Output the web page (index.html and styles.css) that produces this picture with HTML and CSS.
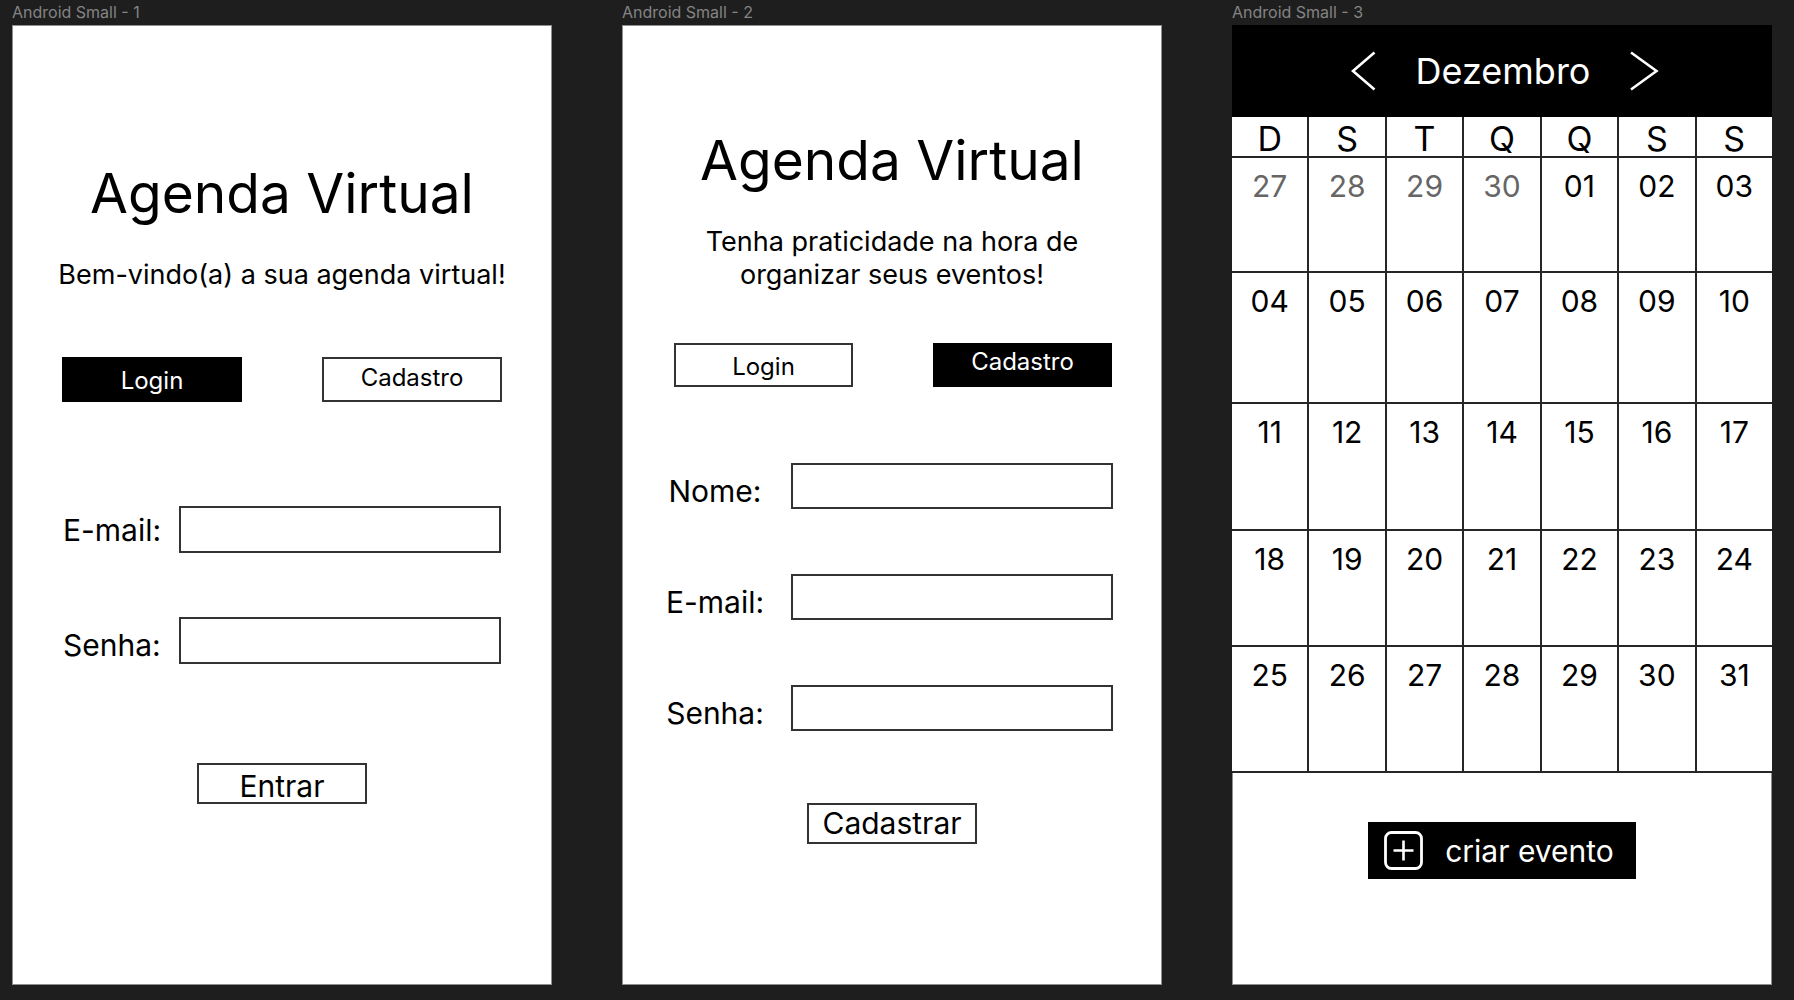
FILE: index.html
```html
<!DOCTYPE html>
<html lang="pt-BR">
<head>
<meta charset="utf-8">
<title>Agenda Virtual</title>
<link rel="stylesheet" href="styles.css">
</head>
<body>
<div class="canvas">

  <section class="artboard">
    <div class="artboard-name">Android Small - 1</div>
    <div class="frame f1">
      <h1 class="title">Agenda Virtual</h1>
      <p class="lead">Bem-vindo(a) a sua agenda virtual!</p>
      <div class="tabs">
        <div class="tab tab-on text-low">Login</div>
        <div class="tab tab-off text-high">Cadastro</div>
      </div>
      <div class="form">
        <div class="row"><span class="label label-a">E-mail:</span><div class="field"></div></div>
        <div class="row"><span class="label">Senha:</span><div class="field"></div></div>
      </div>
      <div class="action action-entrar">Entrar</div>
    </div>
  </section>

  <section class="artboard">
    <div class="artboard-name">Android Small - 2</div>
    <div class="frame f2">
      <h1 class="title">Agenda Virtual</h1>
      <p class="lead">Tenha praticidade na hora de<br>organizar seus eventos!</p>
      <div class="tabs">
        <div class="tab tab-off text-low2">Login</div>
        <div class="tab tab-on text-high2">Cadastro</div>
      </div>
      <div class="form">
        <div class="row"><span class="label">Nome:</span><div class="field"></div></div>
        <div class="row"><span class="label">E-mail:</span><div class="field"></div></div>
        <div class="row"><span class="label">Senha:</span><div class="field"></div></div>
      </div>
      <div class="action action-cadastrar">Cadastrar</div>
    </div>
  </section>

  <section class="artboard">
    <div class="artboard-name">Android Small - 3</div>
    <div class="frame f3">
      <div class="cal-head">
        <svg class="chev" width="26" height="40" viewBox="0 0 26 40"><polyline points="23.5,1.5 2,20 23.5,38.5" fill="none" stroke="#fff" stroke-width="2.6"/></svg>
        <span class="month">Dezembro</span>
        <svg class="chev" width="30" height="40" viewBox="0 0 30 40"><polyline points="2,1.5 27.5,20 2,38.5" fill="none" stroke="#fff" stroke-width="2.6"/></svg>
      </div>
      <div class="cal-grid">
        <div class="dow">D</div><div class="dow">S</div><div class="dow">T</div><div class="dow">Q</div><div class="dow">Q</div><div class="dow">S</div><div class="dow">S</div>
        <div class="day muted">27</div><div class="day muted">28</div><div class="day muted">29</div><div class="day muted">30</div><div class="day">01</div><div class="day">02</div><div class="day">03</div>
        <div class="day">04</div><div class="day">05</div><div class="day">06</div><div class="day">07</div><div class="day">08</div><div class="day">09</div><div class="day">10</div>
        <div class="day">11</div><div class="day">12</div><div class="day">13</div><div class="day">14</div><div class="day">15</div><div class="day">16</div><div class="day">17</div>
        <div class="day">18</div><div class="day">19</div><div class="day">20</div><div class="day">21</div><div class="day">22</div><div class="day">23</div><div class="day">24</div>
        <div class="day">25</div><div class="day">26</div><div class="day">27</div><div class="day">28</div><div class="day">29</div><div class="day">30</div><div class="day">31</div>
      </div>
      <div class="create">
        <svg class="plus" width="39" height="39" viewBox="0 0 39 39"><rect x="1.5" y="1.5" width="36" height="36" rx="6" fill="none" stroke="#fff" stroke-width="2.8"/><path d="M19.5 9.5V29.5M9.5 19.5H29.5" stroke="#fff" stroke-width="2.6" fill="none"/></svg>
        <span>criar evento</span>
      </div>
    </div>
  </section>

</div>
</body>
</html>
```
FILE: styles.css
```css
* { box-sizing: border-box; margin: 0; padding: 0; }
html, body { background: #1e1e1e; }
body {
  font-family: Inter, "Noto Sans", sans-serif;
  color: #000;
  width: 1794px;
  height: 1000px;
  overflow: hidden;
}
.canvas { display: flex; gap: 70px; padding: 3px 0 0 12px; }
.artboard { display: flex; flex-direction: column; gap: 3px; width: 540px; }
.artboard-name { font-size: 16px; line-height: 19px; height: 19px; color: #848484; }
.frame {
  width: 540px; height: 960px; background: #fff;
  box-shadow: inset 0 0 0 1px #8e8e8e;
  display: flex; flex-direction: column;
}

.title { font-size: 55px; line-height: 66px; font-weight: 400; text-align: center; }
.lead { font-size: 27px; text-align: center; }

.tabs { display: flex; gap: 80px; }
.tab { width: 180px; font-size: 24px; display: flex; align-items: center; justify-content: center; }
.tab-on { background: #000; color: #fff; }
.tab-off { border: 2px solid #333; }

.form { display: flex; flex-direction: column; }
.row { display: flex; align-items: flex-start; }
.label { font-size: 30px; line-height: 47px; height: 47px; padding-top: 5px; white-space: nowrap; }
.field { width: 322px; border: 2px solid #333; }

.action {
  align-self: center; width: 170px; height: 41px;
  border: 2px solid #333; font-size: 30px;
  display: flex; align-items: center; justify-content: center;
}

/* frame 1 */
.f1 .title { margin-top: 135px; }
.f1 .lead { margin-top: 33px; line-height: 32px; }
.f1 .tabs { margin-top: 65.5px; padding-left: 50px; }
.f1 .tab { height: 45px; }
.f1 .text-low { padding-top: 2px; }
.f1 .text-high { padding-bottom: 4px; }
.f1 .form { margin-top: 104px; padding-left: 51px; gap: 64.5px; }
.f1 .row { height: 47px; }
.f1 .label { width: 116px; }
.f1 .label-a { padding-top: 1px; }
.f1 .field { height: 47px; }
.f1 .action-entrar { margin-top: 98.5px; padding-top: 5px; }

/* frame 2 */
.f2 .title { margin-top: 102px; }
.f2 .lead { margin-top: 32px; line-height: 33px; }
.f2 .tabs { margin-top: 51.5px; padding-left: 52px; }
.f2 .tab { height: 44px; width: 179px; }
.f2 .text-low2 { padding-top: 4px; }
.f2 .text-high2 { padding-bottom: 6px; }
.f2 .form { margin-top: 76.5px; padding-left: 31px; gap: 65px; }
.f2 .row { height: 46px; }
.f2 .label { width: 124px; margin-right: 14px; text-align: center; }
.f2 .field { height: 46px; }
.f2 .action-cadastrar { margin-top: 71.5px; }

/* frame 3 */
.cal-head {
  height: 92px; background: #000; color: #fff;
  display: flex; align-items: center; justify-content: center;
  gap: 39px; padding-left: 6px;
}
.month { font-size: 36px; line-height: 42px; }
.chev { display: block; }
.cal-grid {
  display: grid;
  grid-template-columns: repeat(7, 1fr);
  grid-template-rows: 39px 113px 129px 125px 114px 124px;
  gap: 2px;
  background: #262626;
  padding-bottom: 2px;
}
.dow { background: #fff; font-size: 34px; line-height: 39px; padding-top: 2px; text-align: center; }
.day { background: #fff; font-size: 30px; line-height: 36px; padding-top: 9.5px; text-align: center; }
.day.muted { color: #666; }
.create {
  align-self: center; margin-top: 49px; height: 57px;
  background: #000; color: #fff;
  display: flex; align-items: center; gap: 22px;
  padding: 0 22px 0 16px; font-size: 30px;
}
.plus { display: block; }
```
